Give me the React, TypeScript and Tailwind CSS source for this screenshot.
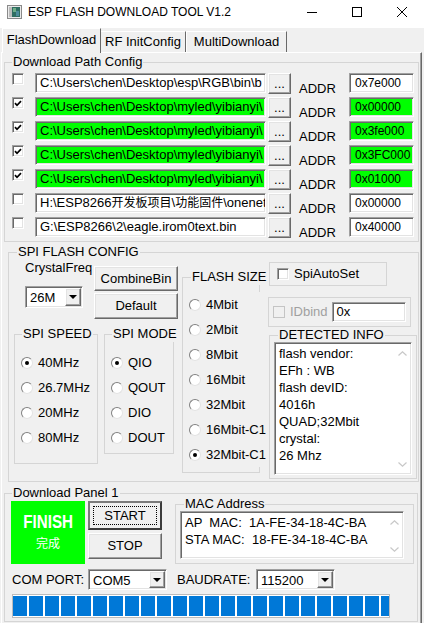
import React from "react";

const sunken =
    "border border-t-[#a0a0a0] border-l-[#a0a0a0] border-r-white border-b-white shadow-[inset_1px_1px_0_#696969,inset_-1px_-1px_0_#e3e3e3]";
const raised =
    "border border-t-white border-l-white border-r-[#696969] border-b-[#696969] shadow-[inset_-1px_-1px_0_#a0a0a0,inset_1px_1px_0_#e3e3e3] bg-[#f0f0f0]";

const paths: {on: boolean; path: React.ReactNode; addr: string}[] = [
    {on: false, path: "C:\\Users\\chen\\Desktop\\esp\\RGB\\bin\\b", addr: "0x7e000"},
    {on: true, path: "C:\\Users\\chen\\Desktop\\myled\\yibianyi\\", addr: "0x00000"},
    {on: true, path: "C:\\Users\\chen\\Desktop\\myled\\yibianyi\\", addr: "0x3fe000"},
    {on: true, path: "C:\\Users\\chen\\Desktop\\myled\\yibianyi\\", addr: "0x3FC000"},
    {on: true, path: "C:\\Users\\chen\\Desktop\\myled\\yibianyi\\", addr: "0x01000"},
    {
        on: false,
        path: (
            <>
                H:\ESP8266<span className="text-[12px]">开发板项目</span>\<span className="text-[12px]">功能固件</span>\onenet
            </>
        ),
        addr: "0x00000",
    },
    {on: false, path: "G:\\ESP8266\\2\\eagle.irom0text.bin", addr: "0x40000"},
];

const detected = ["flash vendor:", "EFh : WB", "flash devID:", "4016h", "QUAD;32Mbit", "crystal:", "26 Mhz"];

function Check({checked = false, disabled = false}: {checked?: boolean; disabled?: boolean}) {
    if (disabled) {
        return <span className="flex w-[12px] h-[12px] shrink-0 border border-[#c4c4c4] bg-[#f0f0f0]"/>;
    }
    return (
        <span className={`flex w-[12px] h-[12px] shrink-0 items-center justify-center bg-white ${sunken}`}>
            {checked && (
                <svg width="8" height="7" viewBox="0 0 8 7">
                    <path d="M1 3.2 L3 5.3 L7 1.2" stroke="black" strokeWidth="1.7" fill="none"/>
                </svg>
            )}
        </span>
    );
}

function Radio({label, on = false}: {label: string; on?: boolean}) {
    return (
        <div className="flex items-center h-[25px] pl-[6px] bg-[#f0f0f0]">
            <span
                className="flex w-[12px] h-[12px] shrink-0 items-center justify-center rounded-full bg-white border border-t-[#808080] border-l-[#808080] border-r-[#e3e3e3] border-b-[#e3e3e3]">
                {on && <span className="w-[4px] h-[4px] rounded-full bg-black"/>}
            </span>
            <span className="ml-[5px] whitespace-nowrap">{label}</span>
        </div>
    );
}

function Combo({value, className}: {value: string; className: string}) {
    return (
        <div className={`flex p-[1px] bg-white ${sunken} ${className}`}>
            <span className="flex-1 pl-[3px] pt-[2px] whitespace-nowrap">{value}</span>
            <span className={`flex w-[16px] items-center justify-center ${raised}`}>
                <span
                    className="w-0 h-0 border-l-[4px] border-r-[4px] border-t-[4px] border-l-transparent border-r-transparent border-t-black"/>
            </span>
        </div>
    );
}

function ScrollArrows({up, down}: {up: string; down: string}) {
    return (
        <div className="flex w-[17px] flex-col items-center justify-between">
            <svg width="9" height="5" viewBox="0 0 9 5" className={up}>
                <path d="M0.5 4.5 L4.5 0.8 L8.5 4.5" stroke="#c8c8c8" strokeWidth="1.2" fill="none"/>
            </svg>
            <svg width="9" height="5" viewBox="0 0 9 5" className={down}>
                <path d="M0.5 0.5 L4.5 4.2 L8.5 0.5" stroke="#c8c8c8" strokeWidth="1.2" fill="none"/>
            </svg>
        </div>
    );
}

function TitleBar() {
    return (
        <div className="flex h-[28px] shrink-0 items-start bg-white">
            <svg width="15" height="14" viewBox="0 0 15 14" className="ml-[7px] mt-[5px]">
                <rect x="0.5" y="0.5" width="14" height="13" fill="#eaeaea" stroke="#8a8a8a"/>
                <rect x="2" y="2" width="3" height="10" fill="#bcbcbc"/>
                <rect x="5" y="2" width="8" height="10" fill="#2f6e62"/>
                <rect x="6" y="3" width="3" height="4" fill="#6fae88"/>
                <rect x="9" y="6" width="3" height="5" fill="#4d8c9a"/>
            </svg>
            <span className="ml-[6px] mt-[5px] text-[12px] leading-[14px]">ESP FLASH DOWNLOAD TOOL V1.2</span>
            <div className="ml-auto flex">
                <div className="flex w-[45px] h-[26px] items-start justify-center pt-[12px]">
                    <svg width="10" height="1" viewBox="0 0 10 1">
                        <path d="M0 0.5 H10" stroke="black" strokeWidth="1"/>
                    </svg>
                </div>
                <div className="flex w-[45px] h-[26px] items-start justify-center pt-[7px]">
                    <svg width="10" height="10" viewBox="0 0 10 10">
                        <rect x="0.5" y="0.5" width="9" height="9" stroke="black" strokeWidth="1" fill="none"/>
                    </svg>
                </div>
                <div className="flex w-[45px] h-[26px] items-start justify-center pt-[7px]">
                    <svg width="10" height="10" viewBox="0 0 10 10">
                        <path d="M0 0 L10 10 M10 0 L0 10" stroke="black" strokeWidth="1"/>
                    </svg>
                </div>
            </div>
        </div>
    );
}

function Tabs() {
    return (
        <div className="flex h-[24px] shrink-0 items-end pl-[2px]">
            <div
                className="relative z-10 -mb-[1px] flex w-[99px] h-[25px] justify-center pt-[3px] bg-[#f0f0f0] border-l border-t border-white border-r border-r-[#696969]">
                FlashDownload
            </div>
            <div
                className="flex w-[85px] h-[21px] justify-center pt-[2px] border-t border-white border-r border-r-[#696969]">
                RF InitConfig
            </div>
            <div
                className="flex w-[101px] h-[21px] justify-center pt-[2px] border-l border-t border-white border-r border-r-[#696969]">
                MultiDownload
            </div>
        </div>
    );
}

function PathConfig() {
    return (
        <fieldset className="ml-[2px] mt-[1px] w-[415px] h-[188px] min-w-0 border border-[#d5d5d5] pt-[3px]">
            <legend className="ml-[7px] px-[1px] whitespace-nowrap">Download Path Config</legend>
            {paths.map((row, i) => (
                <div key={i} className="flex h-[24px] items-start">
                    <span className="ml-[7px]">
                        <Check checked={row.on}/>
                    </span>
                    <div
                        className={`ml-[11px] w-[231px] h-[20px] overflow-hidden whitespace-nowrap pl-[4px] leading-[18px] ${row.on ? "bg-[#00ff00]" : "bg-white"} ${sunken}`}>
                        {row.path}
                    </div>
                    <div className={`ml-[2px] flex w-[23px] h-[21px] items-center justify-center ${raised}`}>...</div>
                    <span className="ml-[8px] mt-[8px] w-[50px]">ADDR</span>
                    <div
                        className={`w-[65px] h-[20px] overflow-hidden whitespace-nowrap pl-[5px] text-[12px] leading-[18px] ${row.on ? "bg-[#00ff00]" : "bg-white"} ${sunken}`}>
                        {row.addr}
                    </div>
                </div>
            ))}
        </fieldset>
    );
}

function SpiConfig() {
    return (
        <fieldset className="ml-[6px] mt-[2px] w-[411px] h-[238px] min-w-0 border border-[#d5d5d5]">
            <legend className="ml-[8px] px-[1px] whitespace-nowrap">SPI FLASH CONFIG</legend>
            <div className="flex items-start">
                <div className="ml-[5px] flex w-[164px] flex-col">
                    <div className="flex">
                        <div className="flex w-[80px] flex-col pl-[11px]">
                            <span className="whitespace-nowrap">CrystalFreq</span>
                            <Combo value="26M" className="mt-[10px] w-[58px] h-[22px]"/>
                        </div>
                        <div className="flex w-[84px] flex-col">
                            <div className={`mt-[6px] flex h-[25px] items-center justify-center ${raised}`}>CombineBin</div>
                            <div className={`mt-[2px] flex h-[26px] items-center justify-center ${raised}`}>Default</div>
                        </div>
                    </div>
                    <div className="mt-[7px] flex items-start">
                        <fieldset className="w-[84px] h-[138px] min-w-0 border border-[#d5d5d5] pt-[8px]">
                            <legend className="ml-[7px] px-[1px] whitespace-nowrap">SPI SPEED</legend>
                            <Radio label="40MHz" on/>
                            <Radio label="26.7MHz"/>
                            <Radio label="20MHz"/>
                            <Radio label="80MHz"/>
                        </fieldset>
                        <fieldset className="ml-[6px] w-[70px] h-[128px] min-w-0 border border-[#d5d5d5] pt-[8px]">
                            <legend className="ml-[7px] px-[1px] whitespace-nowrap">SPI MODE</legend>
                            <Radio label="QIO" on/>
                            <Radio label="QOUT"/>
                            <Radio label="DIO"/>
                            <Radio label="DOUT"/>
                        </fieldset>
                    </div>
                </div>
                <fieldset className="ml-[4px] mt-[9px] w-[78px] h-[204px] min-w-0 border border-[#d5d5d5] pt-[7px]">
                    <legend className="ml-[8px] px-[1px] whitespace-nowrap">FLASH SIZE</legend>
                    {["4Mbit", "2Mbit", "8Mbit", "16Mbit", "32Mbit", "16Mbit-C1", "32Mbit-C1"].map((s) => (
                        <div key={s} className="w-[85px]">
                            <Radio label={s} on={s === "32Mbit-C1"}/>
                        </div>
                    ))}
                </fieldset>
                <div className="ml-[9px] flex w-[149px] flex-col">
                    <div className="mt-[2px] flex w-[118px] h-[24px] items-center border border-[#d5d5d5] pl-[7px]">
                        <Check/>
                        <span className="ml-[5px]">SpiAutoSet</span>
                    </div>
                    <div className="-ml-[1px] mt-[11px] flex w-[143px] h-[30px] items-center border border-[#d5d5d5] pl-[4px]">
                        <Check disabled/>
                        <span className="ml-[5px] text-[#a0a0a0]">IDbind</span>
                        <div className={`ml-[4px] w-[74px] h-[20px] bg-white pl-[4px] leading-[18px] ${sunken}`}>0x</div>
                    </div>
                    <fieldset className="mt-[1px] w-[148px] h-[151px] min-w-0 border border-[#d5d5d5]">
                        <legend className="ml-[8px] px-[1px] leading-[14px] whitespace-nowrap">DETECTED INFO</legend>
                        <div className={`ml-[4px] flex w-[138px] h-[133px] bg-white ${sunken}`}>
                            <div className="flex-1 pl-[4px] pt-[2px] leading-[17px]">
                                {detected.map((l) => (
                                    <div key={l} className="whitespace-nowrap">{l}</div>
                                ))}
                            </div>
                            <ScrollArrows up="mt-[8px]" down="mb-[7px]"/>
                        </div>
                    </fieldset>
                </div>
            </div>
        </fieldset>
    );
}

function DownloadPanel() {
    return (
        <fieldset className="ml-[2px] mt-[3px] w-[414px] h-[137px] min-w-0 border border-[#d5d5d5]">
            <legend className="ml-[7px] px-[1px] whitespace-nowrap">Download Panel 1</legend>
            <div className="flex h-[63px] items-start">
                <div className="ml-[6px] flex w-[74px] h-[63px] flex-col items-center bg-[#00ff00] text-white">
                    <span className="mt-[10px] inline-block scale-x-80 text-[19px] font-bold leading-[22px]">FINISH</span>
                    <span className="mt-[2px] text-[12px] leading-[16px] font-['Noto_Sans_CJK_SC',sans-serif]">完成</span>
                </div>
                <div className="ml-[3px] flex w-[74px] flex-col">
                    <div
                        className="flex h-[29px] p-[3px] border-2 border-t-[#7a7a7a] border-l-[#7a7a7a] border-r-[#3c3c3c] border-b-[#3c3c3c] bg-[#f0f0f0]">
                        <div className="flex flex-1 items-center justify-center border border-dotted border-black">START</div>
                    </div>
                    <div className={`mt-[3px] flex h-[26px] items-center justify-center ${raised}`}>STOP</div>
                </div>
                <fieldset className="ml-[13px] -mt-[4px] w-[239px] h-[67px] min-w-0 border border-[#d5d5d5]">
                    <legend className="ml-[8px] px-[1px] leading-[14px] whitespace-nowrap">MAC Address</legend>
                    <div className={`ml-[4px] flex w-[224px] h-[48px] bg-white ${sunken}`}>
                        <div className="flex-1 whitespace-pre pl-[4px] pt-[2px] leading-[17px]">
                            <div>AP  MAC:  1A-FE-34-18-4C-BA</div>
                            <div>STA MAC:  18-FE-34-18-4C-BA</div>
                        </div>
                        <ScrollArrows up="mt-[8px]" down="mb-[6px]"/>
                    </div>
                </fieldset>
            </div>
            <div className="mt-[5px] flex h-[21px] items-center">
                <span className="ml-[7px] w-[76px] whitespace-nowrap">COM PORT:</span>
                <Combo value="COM5" className="w-[79px] h-[21px]"/>
                <span className="ml-[10px] w-[79px] whitespace-nowrap">BAUDRATE:</span>
                <Combo value="115200" className="w-[79px] h-[21px]"/>
            </div>
            <div className="ml-[7px] mt-[4px] flex w-[378px] h-[24px] gap-[2px] overflow-hidden border border-[#bcbcbc] bg-white py-[1px]">
                {Array.from({length: 24}).map((_, i) => (
                    <span key={i} className="w-[14px] h-full shrink-0 bg-[#0078d7]"/>
                ))}
            </div>
        </fieldset>
    );
}

export default function App() {
    return (
        <div
            className="flex w-[424px] h-[623px] flex-col overflow-hidden bg-[#f0f0f0] text-[13px] leading-[16px] text-black font-['Liberation_Sans',Arial,'Noto_Sans_CJK_SC',sans-serif]">
            <TitleBar/>
            <Tabs/>
            <div
                className="ml-[1px] flex w-[421px] flex-1 flex-col border-l border-t border-white border-r border-r-[#696969] shadow-[inset_-1px_0_0_#a0a0a0]">
                <PathConfig/>
                <SpiConfig/>
                <DownloadPanel/>
            </div>
        </div>
    );
}
